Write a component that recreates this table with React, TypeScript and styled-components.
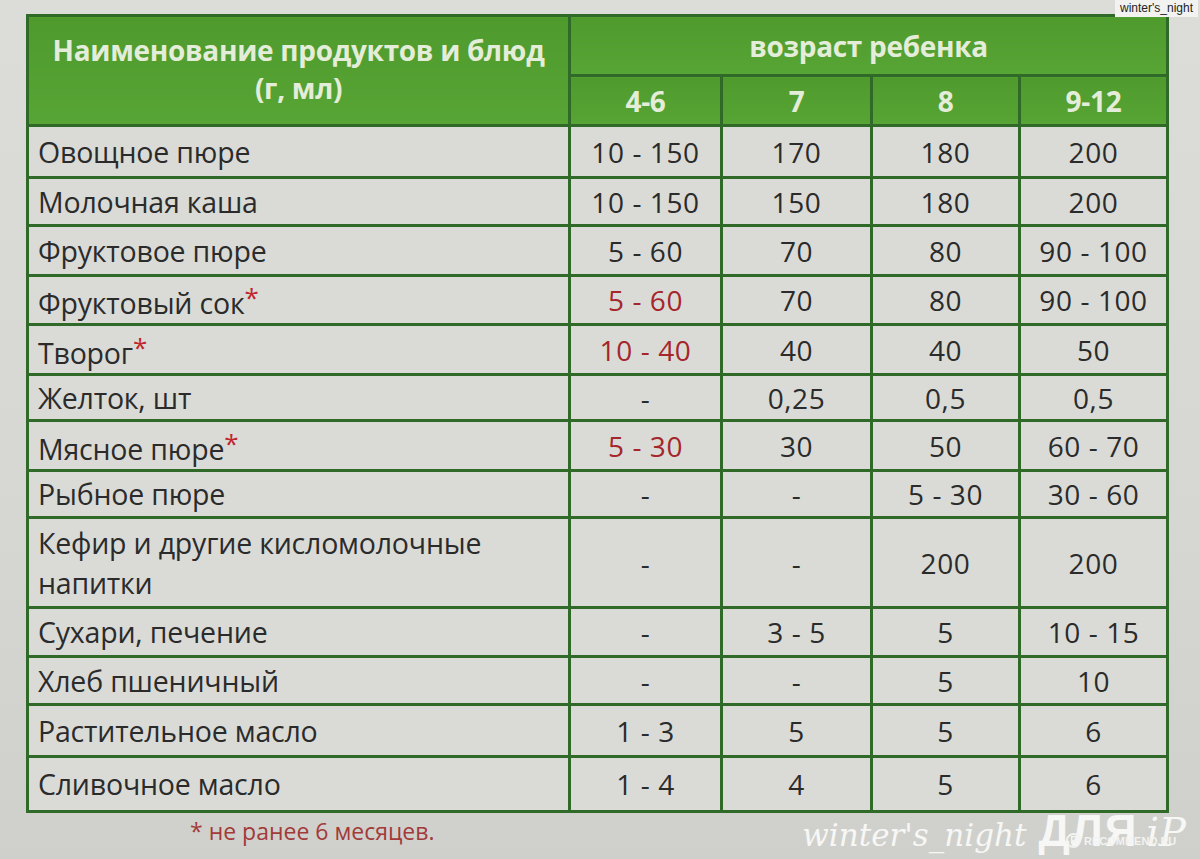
import React from 'react';
import styled, { createGlobalStyle } from 'styled-components';

const GlobalStyle = createGlobalStyle`
  html, body {
    margin: 0;
    padding: 0;
    background: #d9dad6;
  }
  body {
    font-family: 'Open Sans', 'Noto Sans', sans-serif;
  }
`;

const Page = styled.div`
  position: relative;
  width: 1200px;
  height: 859px;
  overflow: hidden;
  background: linear-gradient(180deg, #dcddd9 0%, #d6d7d3 60%, #cfd0cc 100%);
`;

const Sheet = styled.div`
  display: flex;
  flex-direction: column;
  align-items: flex-start;
  padding: 14px 0 0 26px;
`;

const Table = styled.table`
  border-collapse: collapse;
  table-layout: fixed;
  width: 1140px;
  border: 3px solid #2f6a28;
`;

const HeadCell = styled.th<{ $h: number }>`
  height: ${p => p.$h}px;
  padding: 0;
  background: linear-gradient(180deg, #4f9a2d 0%, #57a535 100%);
  border: 3px solid #2f6a28;
  color: #e4edd9;
  font-weight: 700;
  font-size: 28px;
  line-height: 38px;
  letter-spacing: -0.3px;
  text-align: center;
  vertical-align: middle;
`;

const NameHead = styled.div`
  padding-top: 14px;
`;

const Cell = styled.td<{ $h: number; $name?: boolean; $red?: boolean }>`
  height: ${p => p.$h}px;
  padding: ${p => (p.$name ? '0 8px 0 9px' : '0')};
  border: 3px solid #2f6a28;
  background: #dadbd7;
  color: ${p => (p.$red ? '#a5262b' : '#2b2b2b')};
  font-size: ${p => (p.$name ? 28.5 : 28)}px;
  line-height: 40px;
  text-align: ${p => (p.$name ? 'left' : 'center')};
  vertical-align: middle;
  letter-spacing: ${p => (p.$name ? '-0.2px' : '0.6px')};
`;

const Star = styled.span`
  color: #c0262e;
  font-size: 26px;
  vertical-align: 7px;
`;

const Note = styled.div`
  margin: 2px 0 0 164px;
  color: #a33a3a;
  font-size: 23px;
`;

const TopTag = styled.div`
  position: absolute;
  top: 0;
  right: 2px;
  padding: 0 5px;
  background: #f2f2f0;
  color: #222;
  font-family: 'Liberation Sans', Arial, sans-serif;
  font-size: 12px;
  line-height: 17px;
`;

const Mark = styled.div`
  position: absolute;
  right: 14px;
  top: 806px;
  display: flex;
  align-items: baseline;
  gap: 12px;
  color: #f7f7f5;
`;

const MarkScript = styled.span`
  font-family: 'DejaVu Serif', 'Liberation Serif', serif;
  font-style: italic;
  font-size: 31px;
  letter-spacing: 0;
`;

const MarkBig = styled.span`
  font-family: 'Liberation Sans', Arial, sans-serif;
  font-weight: 700;
  font-size: 44px;
  letter-spacing: 2px;
`;

const MarkThin = styled.span`
  font-family: 'DejaVu Serif', serif;
  font-style: italic;
  font-size: 40px;
  margin-left: -4px;
`;

const Recommend = styled.div`
  position: absolute;
  left: 1066px;
  top: 833px;
  display: flex;
  align-items: center;
  gap: 3px;
  color: #f3f3f1;
  font-family: 'Liberation Sans', Arial, sans-serif;
  font-weight: 700;
  font-size: 11px;
`;

type Row = { name: string; star?: boolean; vals: string[]; red?: boolean; pitch: number };

const rows: Row[] = [
  { name: 'Овощное пюре', vals: ['10 - 150', '170', '180', '200'], pitch: 52 },
  { name: 'Молочная каша', vals: ['10 - 150', '150', '180', '200'], pitch: 48 },
  { name: 'Фруктовое пюре', vals: ['5 - 60', '70', '80', '90 - 100'], pitch: 50 },
  { name: 'Фруктовый сок', star: true, red: true, vals: ['5 - 60', '70', '80', '90 - 100'], pitch: 48 },
  { name: 'Творог', star: true, red: true, vals: ['10 - 40', '40', '40', '50'], pitch: 50 },
  { name: 'Желток, шт', vals: ['-', '0,25', '0,5', '0,5'], pitch: 46 },
  { name: 'Мясное пюре', star: true, red: true, vals: ['5 - 30', '30', '50', '60 - 70'], pitch: 50 },
  { name: 'Рыбное пюре', vals: ['-', '-', '5 - 30', '30 - 60'], pitch: 47 },
  { name: 'Кефир и другие кисломолочные напитки', vals: ['-', '-', '200', '200'], pitch: 90 },
  { name: 'Сухари, печение', vals: ['-', '3 - 5', '5', '10 - 15'], pitch: 49 },
  { name: 'Хлеб пшеничный', vals: ['-', '-', '5', '10'], pitch: 48 },
  { name: 'Растительное масло', vals: ['1 - 3', '5', '5', '6'], pitch: 52 },
  { name: 'Сливочное масло', vals: ['1 - 4', '4', '5', '6'], pitch: 55 },
];

const widths = [542, 152, 150, 148, 148];

export default function App() {
  return (
    <Page>
      <GlobalStyle />
      <Sheet>
        <Table>
          <colgroup>
            {widths.map((w, i) => (
              <col key={i} style={{ width: w }} />
            ))}
          </colgroup>
          <thead>
            <tr>
              <HeadCell $h={57} rowSpan={2} style={{ verticalAlign: 'top' }}>
                <NameHead>
                  Наименование продуктов и блюд
                  <br />
                  (г, мл)
                </NameHead>
              </HeadCell>
              <HeadCell $h={57} colSpan={4}>
                возраст ребенка
              </HeadCell>
            </tr>
            <tr>
              {['4-6', '7', '8', '9-12'].map(a => (
                <HeadCell key={a} $h={47}>
                  {a}
                </HeadCell>
              ))}
            </tr>
          </thead>
          <tbody>
            {rows.map(r => (
              <tr key={r.name}>
                <Cell $h={r.pitch - 3} $name>
                  {r.name}
                  {r.star && <Star>*</Star>}
                </Cell>
                {r.vals.map((v, i) => (
                  <Cell key={i} $h={r.pitch - 3} $red={r.red && i === 0}>
                    {v}
                  </Cell>
                ))}
              </tr>
            ))}
          </tbody>
        </Table>
        <Note>* не ранее 6 месяцев.</Note>
      </Sheet>
      <TopTag>winter's_night</TopTag>
      <Mark>
        <MarkScript>winter's_night</MarkScript>
        <MarkBig>ДЛЯ</MarkBig>
        <MarkThin>iP</MarkThin>
      </Mark>
      <Recommend>
        <svg width="15" height="15" viewBox="0 0 16 16">
          <circle cx="8" cy="8" r="7" fill="none" stroke="#f3f3f1" strokeWidth="2" />
          <path d="M6 4h3a2 2 0 0 1 0 4H6zM6 8v4M9 8l2 4" stroke="#f3f3f1" strokeWidth="1.6" fill="none" />
        </svg>
        RECOMMEND.RU
      </Recommend>
    </Page>
  );
}
